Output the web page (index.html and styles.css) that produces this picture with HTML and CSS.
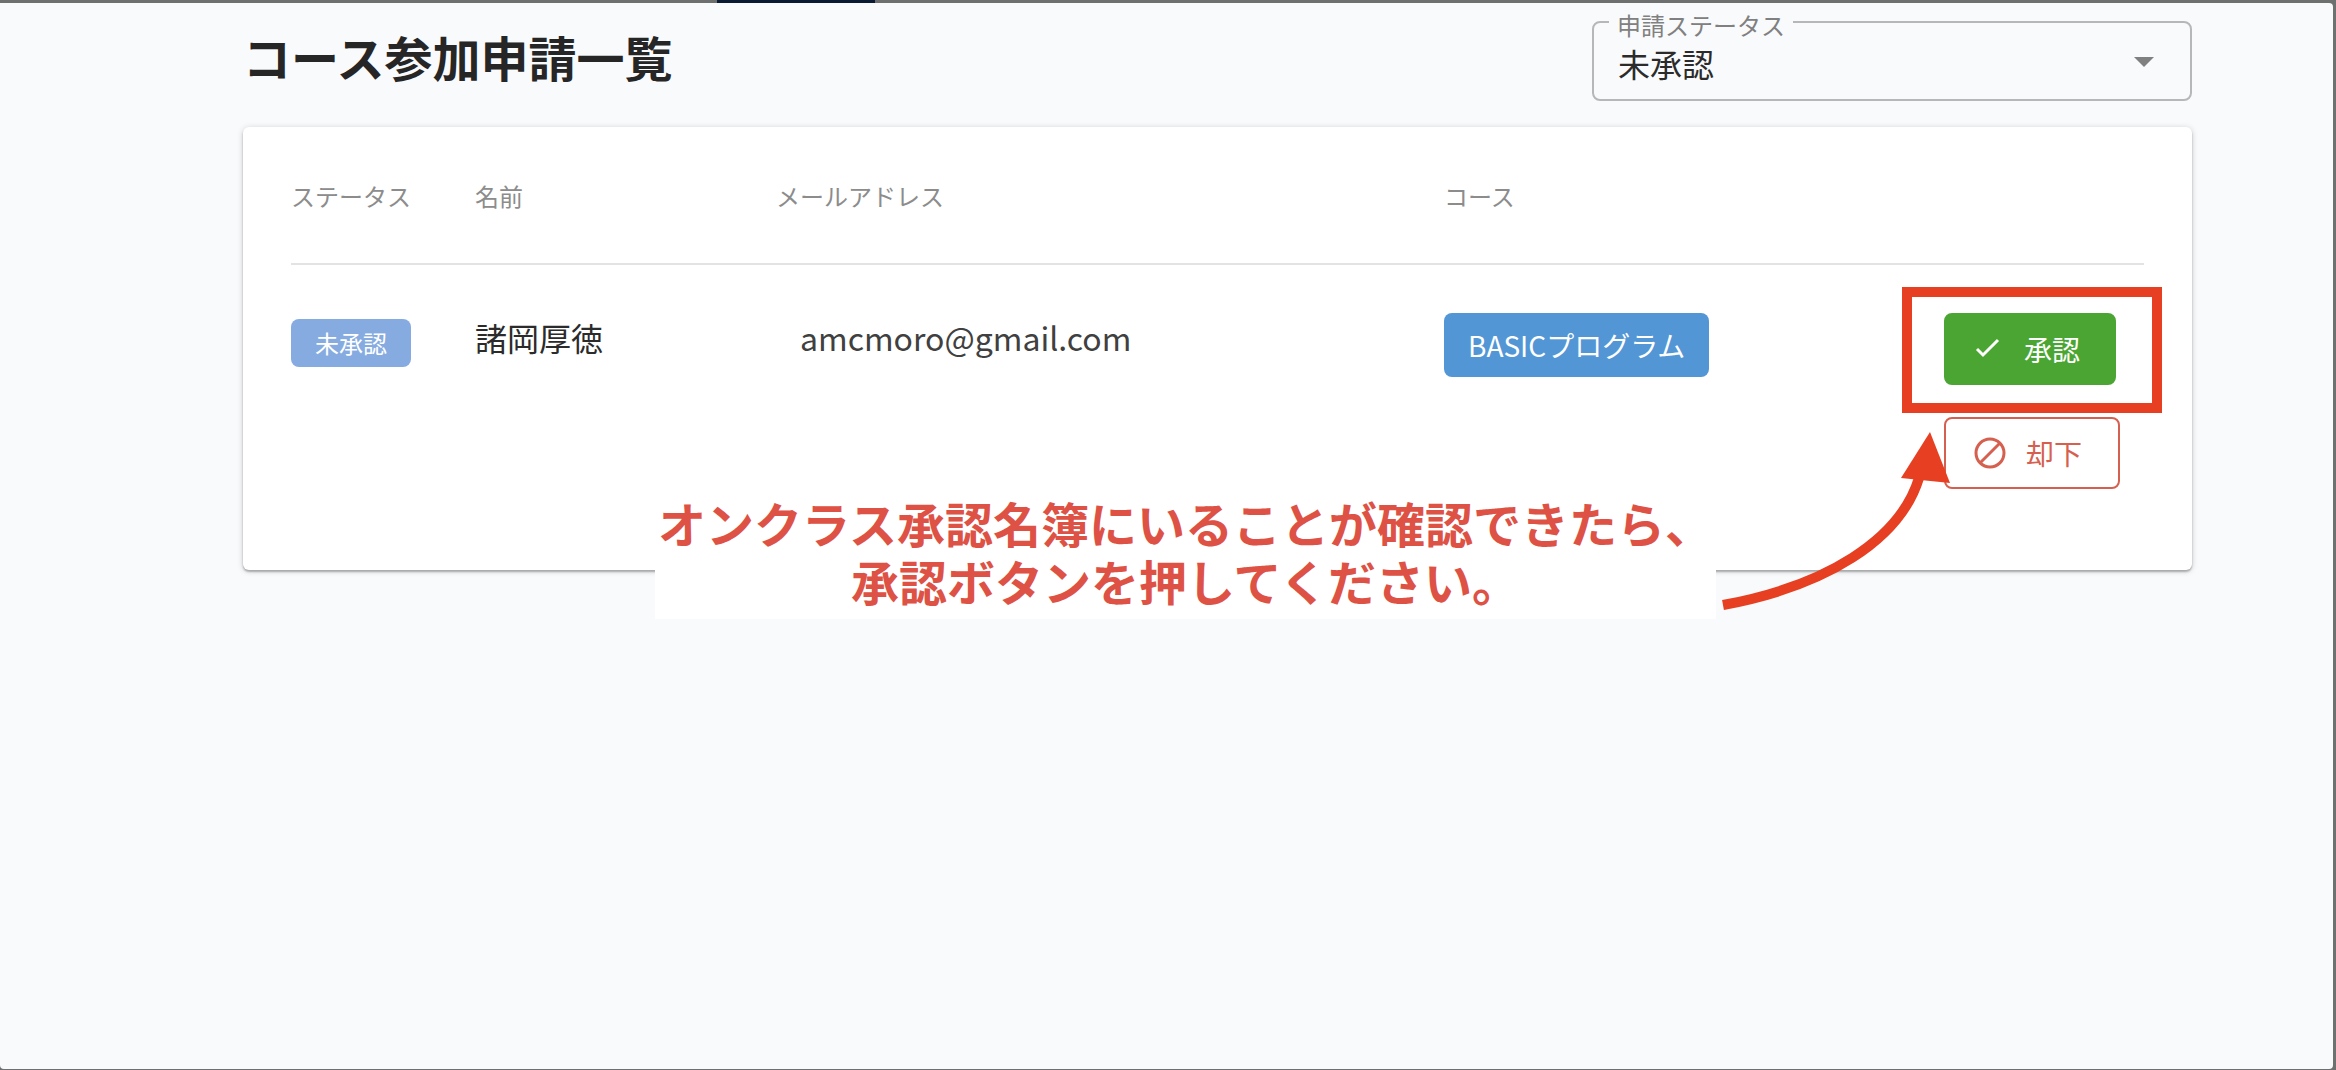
FILE: index.html
```html
<!DOCTYPE html>
<html lang="ja">
<head>
    <meta charset="UTF-8">
    <meta name="viewport" content="width=device-width, initial-scale=1.0">
    <title>コース参加申請一覧</title>
    <link rel="stylesheet" href="styles.css">
</head>
<body>

    <div class="topbar"><div class="topbar-tab"></div></div>

    <main class="page">
        <div class="page-header">
            <h1>コース参加申請一覧</h1>
            <div class="field">
                <label for="status">申請ステータス</label>
                <select id="status">
                    <option selected>未承認</option>
                    <option>承認</option>
                    <option>却下</option>
                </select>
                <svg class="caret" viewBox="0 0 20 10" aria-hidden="true"><path d="M0 0h20L10 10z"/></svg>
            </div>
        </div>

        <section class="card">
            <table class="requests">
                <thead>
                    <tr>
                        <th class="col-status">ステータス</th>
                        <th class="col-name">名前</th>
                        <th class="col-mail">メールアドレス</th>
                        <th class="col-course">コース</th>
                        <th class="col-actions"></th>
                    </tr>
                </thead>
                <tbody>
                    <tr>
                        <td><span class="status">未承認</span></td>
                        <td><span class="name">諸岡厚徳</span></td>
                        <td><span class="mail">amcmoro@gmail.com</span></td>
                        <td><span class="course">BASICプログラム</span></td>
                        <td>
                            <div class="actions">
                                <div class="highlight">
                                    <button type="button" class="btn approve">
                                        <svg viewBox="0 0 32 32" aria-hidden="true"><path d="M5 16l6 6L26 7"/></svg>
                                        承認
                                    </button>
                                </div>
                                <button type="button" class="btn reject">
                                    <svg viewBox="0 0 32 32" aria-hidden="true"><circle cx="16" cy="16" r="14"/><path d="M6 26L26 6"/></svg>
                                    却下
                                </button>
                                <svg class="arrow" viewBox="0 0 240 180" aria-hidden="true">
                                    <path class="arrow-line" d="M7 175C110 156 184 110 203 48"/>
                                    <path class="arrow-head" d="M214 2L185 48l49 5z"/>
                                </svg>
                            </div>
                        </td>
                    </tr>
                </tbody>
            </table>

            <p class="note">オンクラス承認名簿にいることが確認できたら、<br>承認ボタンを押してください。</p>
        </section>
    </main>

</body>
</html>
```
FILE: styles.css
```css
* {
    margin: 0;
    padding: 0;
    box-sizing: border-box;
}

body {
    display: flex;
    flex-direction: column;
    min-height: 100vh;
    font-family: "Noto Sans CJK JP", sans-serif;
    background-color: #6e706f;
    color: #2b2b2b;
}

.topbar {
    height: 3px;
}

.topbar-tab {
    width: 158px;
    height: 3px;
    margin-left: 717px;
    background-color: #0b1a33;
}

.page {
    flex: 1;
    margin: 0 3px 1px 0;
    padding: 18px 141px 48px 243px;
    border-radius: 0 4px 4px 4px;
    background-color: #f9fafc;
}

.page-header {
    display: flex;
    justify-content: space-between;
    align-items: flex-start;
    margin-bottom: 26px;
}

h1 {
    font-size: 48px;
    line-height: 70px;
    color: #262626;
}

.field {
    position: relative;
    width: 600px;
    height: 80px;
    border: 2px solid #b5b7b8;
    border-radius: 8px;
}

.field label {
    position: absolute;
    top: -16px;
    left: 15px;
    padding: 0 8px;
    font-size: 24px;
    line-height: 36px;
    color: #808080;
    background-color: #f9fafc;
}

.field select {
    width: 100%;
    height: 100%;
    padding: 4px 60px 0 24px;
    border: none;
    border-radius: 8px;
    font-family: inherit;
    font-size: 32px;
    color: #2b2b2b;
    background: none;
    appearance: none;
}

.caret {
    position: absolute;
    top: 34px;
    right: 36px;
    width: 20px;
    height: 10px;
    fill: #808080;
    pointer-events: none;
}

.card {
    position: relative;
    min-height: 443px;
    padding: 0 48px;
    border-radius: 6px;
    background-color: #fff;
    box-shadow: 0 2px 2px rgba(0, 0, 0, 0.25), 0 1px 6px rgba(0, 0, 0, 0.18);
}

.requests {
    width: 100%;
    table-layout: fixed;
    border-collapse: collapse;
}

.requests th {
    height: 137px;
    padding-top: 2px;
    border-bottom: 2px solid #e3e3e3;
    font-size: 24px;
    font-weight: 400;
    line-height: 36px;
    text-align: left;
    vertical-align: middle;
    color: #8c8c8c;
}

.requests td {
    padding-top: 48px;
    vertical-align: top;
}

.col-status {
    width: 184px;
}

.col-name {
    width: 301px;
}

.col-course {
    width: 500px;
}

.col-actions {
    width: 200px;
}

.status {
    display: inline-block;
    margin-top: 6px;
    padding: 0 24px;
    border-radius: 8px;
    font-size: 24px;
    line-height: 48px;
    color: #fff;
    background-color: #86abe0;
}

.name, .mail {
    display: block;
    font-size: 32px;
    line-height: 48px;
}

.mail {
    padding-left: 24px;
    color: #404040;
}

.course {
    display: inline-block;
    padding: 0 24px;
    border-radius: 8px;
    font-size: 28px;
    line-height: 64px;
    color: #fff;
    background-color: #5296d5;
}

.actions {
    position: relative;
    display: flex;
    flex-direction: column;
    align-items: flex-start;
    gap: 32px;
}

.btn {
    display: flex;
    align-items: center;
    gap: 20px;
    height: 72px;
    padding: 0 34px 0 26px;
    border: 2px solid;
    border-radius: 8px;
    font-family: inherit;
    font-size: 28px;
    cursor: pointer;
}

.btn svg {
    width: 32px;
    height: 32px;
    fill: none;
    stroke: currentColor;
    stroke-width: 3;
}

.approve {
    color: #fff;
    border-color: #4aa533;
    background-color: #4aa533;
}

.reject {
    padding: 0 36px 0 28px;
    color: #d6604f;
    background-color: #fff;
}

.highlight {
    position: relative;
}

.highlight::after {
    content: '';
    position: absolute;
    inset: -26px -46px -28px -42px;
    border: 10px solid #e63f22;
    pointer-events: none;
}

.arrow {
    position: absolute;
    top: 117px;
    left: -228px;
    width: 240px;
    height: 180px;
    z-index: 2;
    pointer-events: none;
}

.arrow-line {
    fill: none;
    stroke: #e63f22;
    stroke-width: 10;
}

.arrow-head {
    fill: #e63f22;
}

/* callout over the lower edge of the card */
.note {
    position: absolute;
    bottom: -49px;
    left: 412px;
    padding: 0 3px 10px;
    font-size: 48px;
    font-weight: 700;
    line-height: 58px;
    text-align: center;
    color: #de5245;
    background-color: #fff;
}
```
